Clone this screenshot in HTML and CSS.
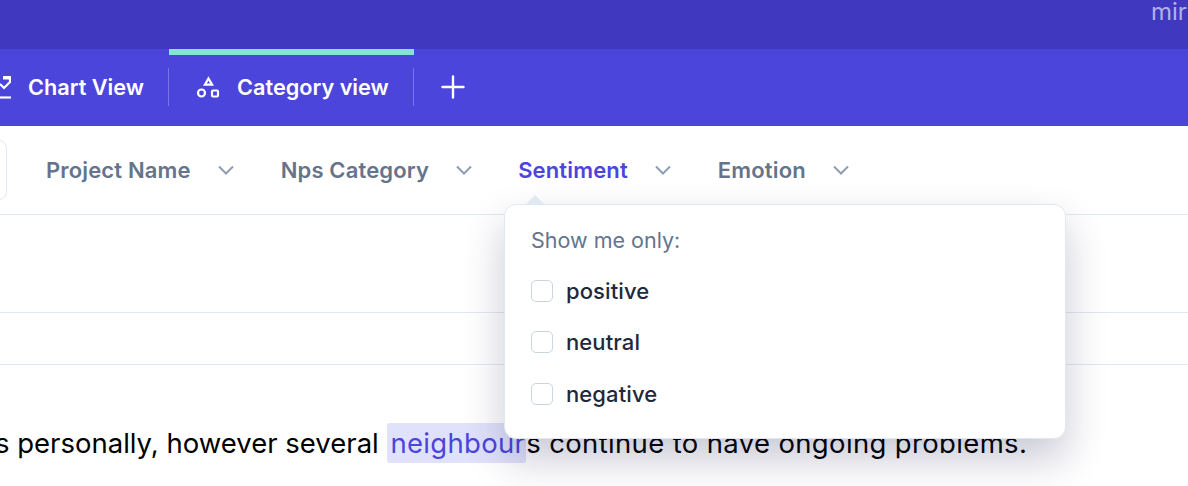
FILE: index.html
```html
<!DOCTYPE html>
<html lang="en">
<head>
  <meta charset="UTF-8">
  <title>Category view</title>
  <link rel="stylesheet" href="styles.css">
</head>
<body>
  <div class="topbar"><span class="user">mir</span></div>

  <div class="tabs">
    <div class="tab tab-chart">
      <svg class="tab-icon" width="24" height="24" viewBox="0 0 24 24" fill="none" stroke="#fff" stroke-width="2.2">
        <path d="M16 1h6v3.5h-6z" fill="#fff" stroke="none"/>
        <path d="M21 2h2v5.5"/>
        <path d="M13 9l4 4 6.5-6.5"/>
        <path d="M13 22.5h11"/>
      </svg>
      <span>Chart View</span>
    </div>
    <div class="tab tab-active">
      <svg class="tab-icon" width="24" height="24" viewBox="0 0 24 24" fill="none" stroke="#fff" stroke-width="2.2">
        <path d="M12.5 3.5l3.6 6.2h-7.2z"/>
        <circle cx="5.5" cy="18" r="3.5"/>
        <rect x="16" y="15.5" width="6" height="6" rx="1"/>
      </svg>
      <span>Category view</span>
    </div>
    <div class="tab-add">
      <svg width="24" height="24" viewBox="0 0 24 24" fill="none" stroke="#fff" stroke-width="2.4" stroke-linecap="round">
        <path d="M12 1.5v21M1.5 12h21"/>
      </svg>
    </div>
  </div>

  <div class="filters">
    <div class="search-box"></div>
    <div class="filter filter-project"><span>Project Name</span><svg class="chev" width="16" height="10" viewBox="0 0 16 10"><path d="M1 1.5l7 7 7-7"/></svg></div>
    <div class="filter filter-nps"><span>Nps Category</span><svg class="chev" width="16" height="10" viewBox="0 0 16 10"><path d="M1 1.5l7 7 7-7"/></svg></div>
    <div class="filter filter-sentiment filter-open"><span>Sentiment</span><svg class="chev" width="16" height="10" viewBox="0 0 16 10"><path d="M1 1.5l7 7 7-7"/></svg></div>
    <div class="filter"><span>Emotion</span><svg class="chev" width="16" height="10" viewBox="0 0 16 10"><path d="M1 1.5l7 7 7-7"/></svg></div>
  </div>

  <div class="row-empty"></div>
  <div class="row-empty row-short"></div>

  <p class="comment">s personally, however several <mark class="hl">neighbour</mark><span class="comment-end">s continue to have ongoing problems.</span></p>

  <div class="dropdown">
    <div class="dropdown-arrow"></div>
    <div class="dropdown-title">Show me only:</div>
    <label class="option"><span class="check"></span>positive</label>
    <label class="option"><span class="check"></span>neutral</label>
    <label class="option"><span class="check"></span>negative</label>
  </div>
</body>
</html>
```

FILE: styles.css
```css
html, body {
  margin: 0;
  height: 486px;
  overflow: hidden;
}
body {
  position: relative;
  font-family: Inter, "Noto Sans", sans-serif;
  background: #fff;
}
.topbar {
  height: 49px;
  background: #4039c0;
  display: flex;
  justify-content: flex-end;
  overflow: hidden;
}
.user {
  color: #b3b0e6;
  font-size: 24px;
  line-height: 24px;
  width: 37px;
  white-space: nowrap;
}
.tabs {
  height: 77px;
  background: #4c45db;
  display: flex;
  color: #fff;
  font-size: 21.7px;
  font-weight: 600;
  margin-left: -13px;
}
.tab {
  display: flex;
  align-items: center;
  gap: 17px;
  height: 77px;
  position: relative;
  padding-bottom: 2px;
  box-sizing: border-box;
}
.tab-chart {
  width: 182px;
}
.tab-active {
  width: 245px;
  padding-left: 27px;
  box-shadow: inset 0 6px 0 #84e5d5;
}
.tab-chart::after, .tab-active::after {
  content: "";
  position: absolute;
  right: 0;
  top: 19px;
  height: 38px;
  width: 1px;
  background: #7a74e6;
}
.tab-icon {
  flex: none;
}
.tab-add {
  display: flex;
  align-items: center;
  margin-left: 27px;
  padding-bottom: 2px;
}
.filters {
  height: 88px;
  border-bottom: 1px solid #e2e8f0;
  display: flex;
  align-items: center;
  color: #64748b;
  font-size: 22px;
  font-weight: 600;
  letter-spacing: 0.15px;
}
.search-box {
  width: 38px;
  height: 58px;
  margin-left: -33px;
  margin-right: 39px;
  border: 1px solid #e2e8f0;
  border-radius: 8px;
  flex: none;
}
.filter {
  display: flex;
  align-items: center;
  gap: 27px;
}
.filter-project, .filter-sentiment {
  margin-right: 47px;
}
.filter-nps {
  margin-right: 46px;
}
.filter-open {
  color: #4c45db;
}
.chev {
  fill: none;
  stroke: #8f9db3;
  stroke-width: 2;
}
.row-empty {
  height: 97px;
  border-bottom: 1px solid #e2e8f0;
}
.row-short {
  height: 51px;
}
.comment {
  margin: 57px 0 0 -5px;
  font-size: 27.5px;
  line-height: 42px;
  color: #000;
  white-space: nowrap;
}
.hl {
  background: #e0e2fb;
  color: #4c45db;
  margin-left: 1px;
  padding: 3px 1px 3px 3px;
  border-radius: 3px;
  letter-spacing: 0.3px;
}
.comment-end {
  letter-spacing: 0.35px;
}
.dropdown {
  position: absolute;
  left: 504px;
  top: 204px;
  width: 562px;
  height: 235px;
  box-sizing: border-box;
  background: #fff;
  border: 1px solid #e2e8f0;
  border-radius: 12px;
  padding: 22px 25px 22px 26px;
  box-shadow: 0 20px 40px rgba(30, 30, 80, 0.24);
}
.dropdown-arrow {
  position: absolute;
  left: 20px;
  top: -10px;
  width: 0;
  height: 0;
  border-left: 10px solid transparent;
  border-right: 10px solid transparent;
  border-bottom: 10px solid #e2e8f0;
}
.dropdown-title {
  color: #64748b;
  font-size: 21.5px;
  line-height: 26px;
  margin-bottom: 12px;
}
.option {
  display: flex;
  align-items: center;
  gap: 13px;
  height: 51.5px;
  color: #1e293b;
  font-size: 22px;
  font-weight: 500;
  letter-spacing: 0.1px;
}
.check {
  width: 20px;
  height: 20px;
  border: 1px solid #cbd5e1;
  border-radius: 5px;
  flex: none;
}
```
